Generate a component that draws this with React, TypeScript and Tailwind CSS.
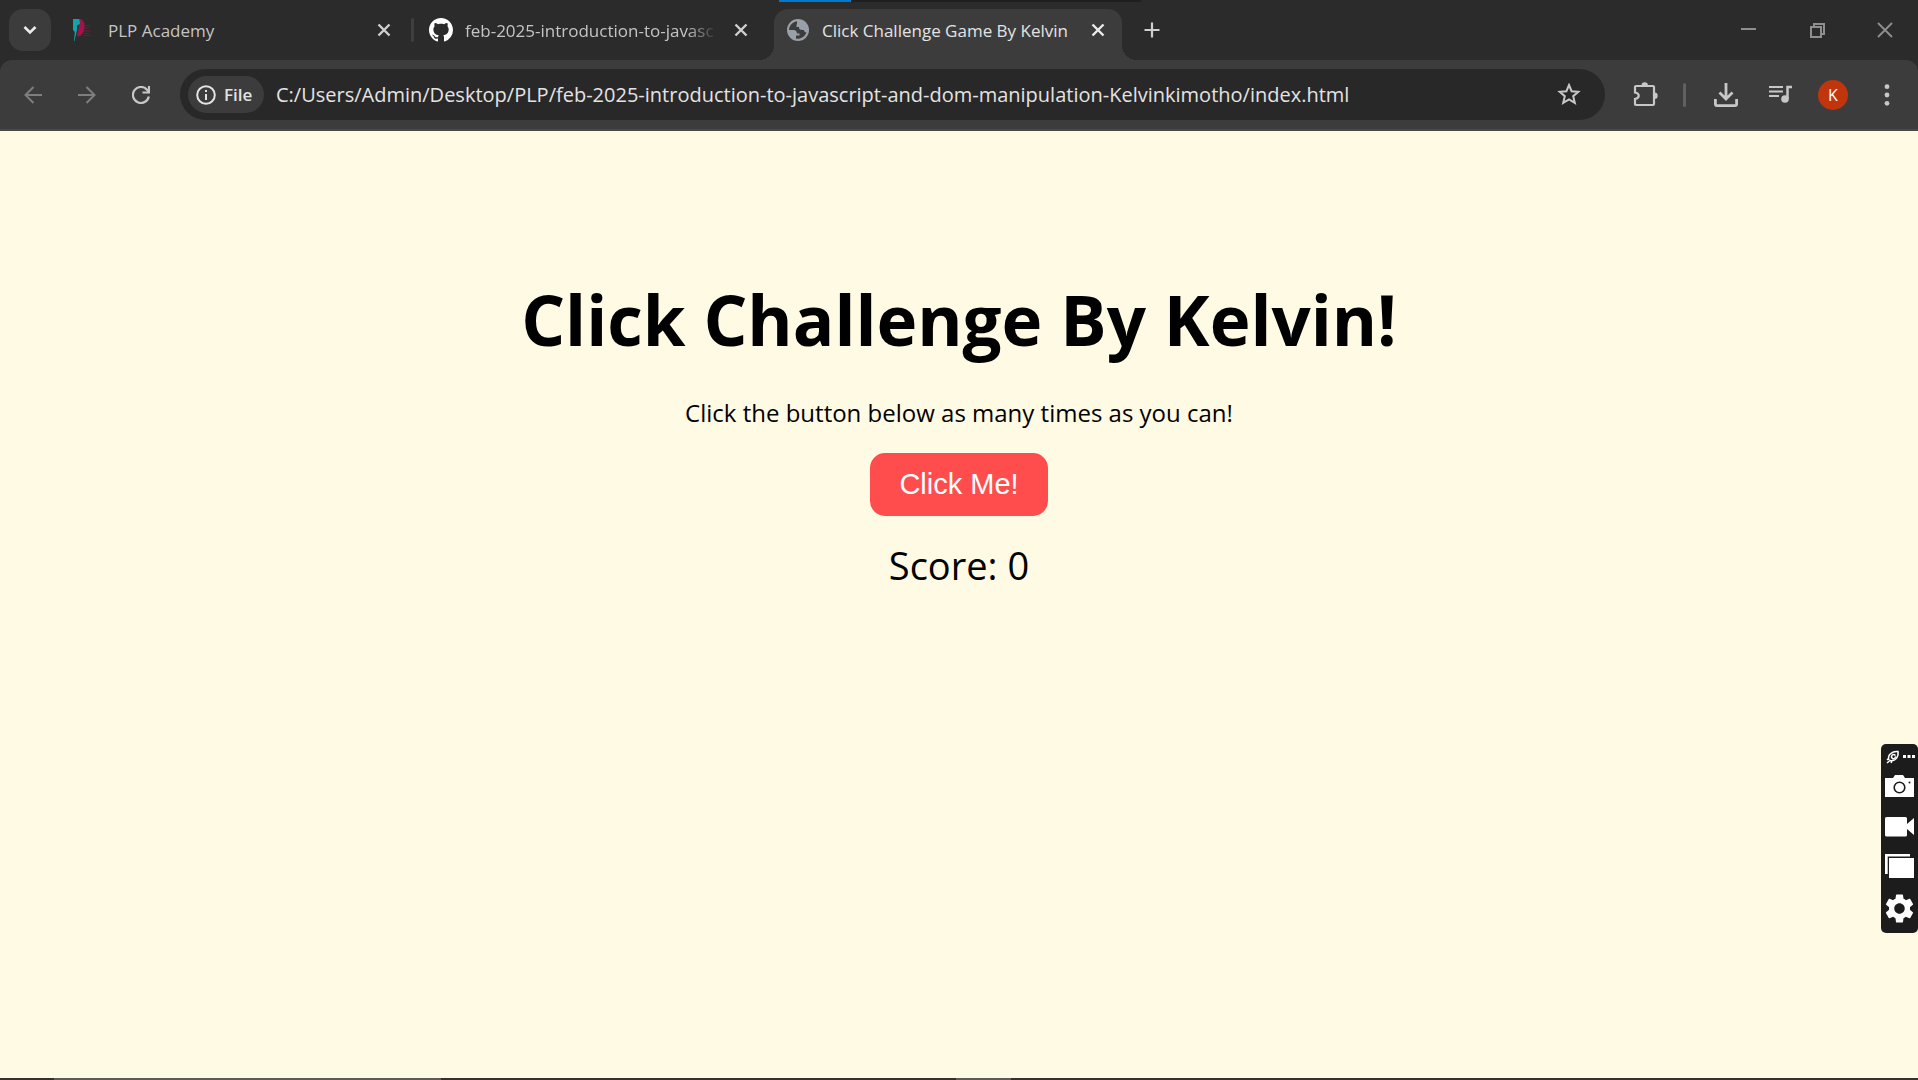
import { useState, type ReactNode } from "react";

type IconButtonProps = { label: string; className?: string; children: ReactNode };

function IconButton({ label, className = "", children }: IconButtonProps) {
  return (
    <button type="button" aria-label={label} className={`flex shrink-0 items-center justify-center ${className}`}>
      {children}
    </button>
  );
}

function CloseTab({ bright = false }: { bright?: boolean }) {
  return (
    <IconButton label="Close tab" className={bright ? "size-6 text-[#ececec]" : "size-6 text-[#cfcfcf]"}>
      <svg width="14" height="14" viewBox="0 0 14 14" fill="none" stroke="currentColor" strokeWidth="2.4">
        <path d="M1.5 1.5l11 11M12.5 1.5l-11 11" />
      </svg>
    </IconButton>
  );
}

function AcademyLogo() {
  return (
    <svg width="24" height="24" viewBox="0 0 24 24" className="shrink-0">
      <path d="M10 1c7 1 6 17-3 17.500L8 12l1-4z" fill="#a3124a" />
      <path d="M3 1h6.500l.5 5-2 1-1 5-2.500 11H4l.8-9L3 12z" fill="#0ea5ad" />
      <path d="M7 7l2 1-1.500 6z" fill="#2b2b2b" />
      <path d="M14 7.500h6M14 10h5M14 13h7M14 15.500h5M14 17.500h7" stroke="#6b1a38" strokeWidth="1" />
    </svg>
  );
}

function GitHubLogo() {
  return (
    <svg width="24" height="24" viewBox="0 0 16 16" fill="#fff" className="shrink-0">
      <path d="M8 0C3.580 0 0 3.580 0 8c0 3.540 2.290 6.530 5.470 7.590.4.070.55-.17.55-.38 0-.19-.01-.82-.01-1.490-2.010.37-2.530-.49-2.690-.94-.09-.23-.48-.94-.82-1.130-.28-.15-.68-.52-.01-.53.63-.01 1.080.58 1.230.82.72 1.210 1.870.87 2.330.66.070-.52.28-.87.51-1.070-1.780-.2-3.640-.89-3.640-3.950 0-.87.31-1.590.82-2.150-.08-.2-.36-1.020.08-2.120 0 0 .67-.21 2.200.82.64-.18 1.320-.27 2-.27s1.360.09 2 .27c1.530-1.040 2.200-.82 2.200-.82.44 1.100.16 1.920.08 2.120.51.56.82 1.270.82 2.150 0 3.070-1.870 3.750-3.650 3.950.29.25.54.73.54 1.480 0 1.070-.01 1.930-.01 2.200 0 .21.15.46.55.38A8.010 8.010 0 0 0 16 8c0-4.420-3.580-8-8-8z" />
    </svg>
  );
}

function Globe() {
  return (
    <svg width="24" height="24" viewBox="0 0 24 24" className="shrink-0">
      <circle cx="12" cy="12" r="11" fill="#9aa0a8" />
      <path
        d="M11 3.200C6.500 4 3.200 7.500 3 12h4.500c2 0 3.500 1.500 3.500 3.500h2.500v2H10v3.200c4.500.8 9-2 10.500-6.200-1.500 0-2.500-1-2.500-2.500-2 0-5 0-5-2.500V9h-2.500V6.500H11z"
        fill="#3c3c3c"
      />
    </svg>
  );
}

function TabStrip() {
  return (
    <header className="relative flex h-[60px] items-end bg-[#2b2b2b] text-[17px] leading-[26px] text-[#c4c4c4]">
      <div className="absolute left-[779px] top-0 flex h-[2px] w-[362px] bg-[#1f1f1f]">
        <div className="w-[72px] bg-[#0078d4]" />
      </div>
      <div className="flex h-[51px] shrink-0 items-start pl-[9px]">
        <IconButton label="Search tabs" className="size-[42px] rounded-[14px] bg-[#3c3c3c] text-[#ececec]">
          <svg width="14" height="10" viewBox="0 0 14 10" fill="none" stroke="currentColor" strokeWidth="2.600">
            <path d="M1.500 2L7 7.500 12.500 2" />
          </svg>
        </IconButton>
      </div>
      <div className="flex h-[51px] w-[360px] items-start gap-3 pl-[19px] pr-[15px] pt-[9px]">
        <AcademyLogo />
        <a href="#academy" className="min-w-0 flex-1 overflow-hidden whitespace-nowrap pl-0.5">PLP Academy</a>
        <CloseTab />
      </div>
      <div className="mb-[18px] h-6 w-[3px] rounded-sm bg-[#3f3f3f]" />
      <div className="flex h-[51px] w-[360px] items-start gap-3 pl-[15px] pr-[21px] pt-[9px]">
        <GitHubLogo />
        <a
          href="#repository"
          className="min-w-0 flex-1 overflow-hidden whitespace-nowrap [mask-image:linear-gradient(to_right,black_88%,transparent)]"
        >
          feb-2025-introduction-to-javasc
        </a>
        <CloseTab />
      </div>
      <div className="relative flex h-[51px] w-[348px] items-start gap-3 rounded-t-[14px] bg-[#3c3c3c] px-3 pt-[9px] text-[#e3e3e3]">
        <span className="absolute -left-[15px] bottom-0 size-[15px] bg-[radial-gradient(circle_at_0_0,transparent_15px,#3c3c3c_15px)]" />
        <span className="absolute -right-[15px] bottom-0 size-[15px] bg-[radial-gradient(circle_at_100%_0,transparent_15px,#3c3c3c_15px)]" />
        <Globe />
        <a href="#game" className="min-w-0 flex-1 overflow-hidden whitespace-nowrap">Click Challenge Game By Kelvin</a>
        <CloseTab bright />
      </div>
      <div className="flex h-[51px] flex-1 items-start pl-[18px] pt-[9px]">
        <IconButton label="New tab" className="size-6 text-[#cfcfcf]">
          <svg width="16" height="16" viewBox="0 0 16 16" stroke="currentColor" strokeWidth="2.200">
            <path d="M8 0.500v15M0.500 8h15" />
          </svg>
        </IconButton>
      </div>
      <div className="flex h-[60px] items-center text-[#8f8f8f]">
        <IconButton label="Minimize" className="h-[60px] w-[69px]">
          <svg width="15" height="16" viewBox="0 0 15 16"><path d="M0 6h15v2H0z" fill="currentColor" /></svg>
        </IconButton>
        <IconButton label="Restore" className="h-[60px] w-[69px]">
          <svg width="15" height="15" viewBox="0 0 15 15" fill="none" stroke="currentColor" strokeWidth="2">
            <path d="M1 4h10v10H1zM4 4V1h10v10h-3" />
          </svg>
        </IconButton>
        <IconButton label="Close window" className="h-[60px] w-[66px]">
          <svg width="16" height="16" viewBox="0 0 16 16" stroke="currentColor" strokeWidth="1.800">
            <path d="M1 1l14 14M15 1L1 15" />
          </svg>
        </IconButton>
      </div>
    </header>
  );
}

function Toolbar() {
  return (
    <div className="bg-[#2b2b2b]">
      <nav className="flex h-[71px] items-start rounded-t-[12px] border-b-2 border-[#484848] bg-[#3c3c3c] pt-[9px] text-[#c7c7c7]">
        <div className="flex h-[51px] items-center pl-[6px] text-[#7e7e7e]">
          <IconButton label="Back" className="h-10 w-[54px]">
            <svg width="18" height="18" viewBox="0 0 18 18" fill="none" stroke="currentColor" strokeWidth="2">
              <path d="M18 9H2M9.500 1L1.500 9l8 8" />
            </svg>
          </IconButton>
          <IconButton label="Forward" className="h-10 w-[54px]">
            <svg width="18" height="18" viewBox="0 0 18 18" fill="none" stroke="currentColor" strokeWidth="2">
              <path d="M0 9h16M8.500 1l8 8-8 8" />
            </svg>
          </IconButton>
          <IconButton label="Reload" className="h-10 w-[54px] text-[#c7c7c7]">
            <svg width="18" height="18" viewBox="0 0 18 18" fill="none" stroke="currentColor" strokeWidth="2.200">
              <path d="M16.800 10.500A8 8 0 1 1 15 3.700L17 6" />
              <path d="M17 0v6.500h-6.500" />
            </svg>
          </IconButton>
        </div>
        <div className="ml-3 flex h-[51px] min-w-0 flex-1 items-center rounded-full bg-[#282828] pl-2 pr-6">
          <button
            type="button"
            className="flex h-[37px] w-[76px] shrink-0 items-center gap-2 rounded-full bg-[#3c3c3c] pl-2 text-[17px] font-semibold text-[#e3e3e3]"
          >
            <svg width="20" height="20" viewBox="0 0 20 20" fill="none" stroke="currentColor" strokeWidth="2" className="shrink-0">
              <circle cx="10" cy="10" r="8.800" />
              <path d="M10 9v6M10 5v2" />
            </svg>
            File
          </button>
          <input
            aria-label="Address"
            defaultValue="C:/Users/Admin/Desktop/PLP/feb-2025-introduction-to-javascript-and-dom-manipulation-Kelvinkimotho/index.html"
            className="ml-3 h-9 min-w-0 flex-1 bg-transparent text-[20px] text-[#e3e3e3] outline-none"
          />
          <IconButton label="Bookmark" className="size-6">
            <svg width="24" height="24" viewBox="0 0 24 24" fill="none" stroke="currentColor" strokeWidth="2">
              <path d="M12 2l2.600 6.200 6.700.6-5.100 4.400 1.600 6.600L12 16.300l-5.800 3.500 1.600-6.600-5.100-4.400 6.700-.6z" />
            </svg>
          </IconButton>
        </div>
        <div className="flex h-[51px] shrink-0 items-center pl-[14px] pr-1">
          <IconButton label="Extensions" className="h-10 w-[54px]">
            <svg width="26" height="26" viewBox="0 0 26 26">
              <path
                d="M3 4h17q1 0 1 1v17q0 1-1 1H3q-1 0-1-1v-5c5-1 5-5.500 0-6.500V5q0-1 1-1z"
                fill="none"
                stroke="currentColor"
                strokeWidth="2.200"
              />
              <path d="M8.500 3.500a3.200 3.200 0 0 1 6.400 0zM21.500 10.500a3.200 3.200 0 0 1 0 6.400z" fill="currentColor" />
            </svg>
          </IconButton>
          <span className="mx-2.5 h-6 w-[3px] rounded-sm bg-[#606060]" />
          <IconButton label="Downloads" className="h-10 w-[60px]">
            <svg width="24" height="24" viewBox="0 0 24 24" fill="none" stroke="currentColor" strokeWidth="2.800">
              <path d="M12 0v16M5.500 9.500L12 16l6.500-6.500M1.400 16v5q0 1.600 1.600 1.600h18q1.600 0 1.600-1.600v-5" />
            </svg>
          </IconButton>
          <IconButton label="Media controls" className="h-10 w-[50px]">
            <svg width="24" height="20" viewBox="0 0 24 20" fill="none" stroke="currentColor" strokeWidth="2.200">
              <path d="M0 2h14M0 6.500h14M0 11h10" />
              <path d="M18.500 14V2H23" strokeWidth="2.500" />
              <circle cx="16" cy="14" r="3.800" fill="currentColor" stroke="none" />
            </svg>
          </IconButton>
          <IconButton label="Profile" className="mx-3 size-[30px] rounded-full bg-[#c1350d] font-['Open_Sans',sans-serif] text-[16px] text-white">
            K
          </IconButton>
          <IconButton label="Menu" className="h-10 w-[54px]">
            <svg width="6" height="22" viewBox="0 0 6 22" fill="currentColor">
              <circle cx="3" cy="2.700" r="2.400" />
              <circle cx="3" cy="11" r="2.400" />
              <circle cx="3" cy="19.300" r="2.400" />
            </svg>
          </IconButton>
        </div>
      </nav>
    </div>
  );
}

function CaptureWidget() {
  return (
    <aside className="fixed right-0 top-[744px] flex w-[37px] flex-col items-center rounded-[5px] bg-[#1c1c1c] pb-[10px] pt-[5px] text-white">
      <div className="flex h-[15px] items-center gap-[3px] pl-0.5">
        <svg width="14" height="14" viewBox="0 0 14 14" fill="none" stroke="currentColor" strokeWidth="1.500">
          <path d="M3 10C1 5 6 1 12 1.500 13 7 9 12 4 10.500L1 13M3 8l-2 2M6 11l-1 2" />
          <path d="M9.500 5.500C7 3 4.500 6 6 8s4 0 3-1.500" />
        </svg>
        <svg width="12" height="3" viewBox="0 0 12 3" fill="currentColor">
          <path d="M0 0h3v3H0zM4.500 0h3v3h-3zM9 0h3v3H9z" />
        </svg>
      </div>
      <IconButton label="Take screenshot" className="mt-[11px] h-[22px]">
        <svg width="29" height="22" viewBox="0 0 29 22">
          <path d="M0 3h8l2-3h8l2 3h9v19H0z" fill="currentColor" />
          <circle cx="14.500" cy="12.500" r="5.300" fill="none" stroke="#1c1c1c" strokeWidth="1.600" />
          <circle cx="24.500" cy="7.500" r="1" fill="#1c1c1c" />
        </svg>
      </IconButton>
      <IconButton label="Record video" className="mt-5 h-5">
        <svg width="29" height="20" viewBox="0 0 29 20" fill="currentColor">
          <path d="M1.500 0h19q1.500 0 1.500 1.500V7l7-6v17l-7-6v6q0 1.500-1.500 1.500h-19Q0 19.500 0 18V1.500Q0 0 1.500 0z" />
        </svg>
      </IconButton>
      <IconButton label="Open gallery" className="mt-[17px] h-6">
        <svg width="29" height="24" viewBox="0 0 29 24" fill="currentColor">
          <path d="M0 0h25v2.500H2.700V20H0zM4 4h25v20H4z" />
        </svg>
      </IconButton>
      <IconButton label="Settings" className="mt-[15px] h-[30px]">
        <svg width="35" height="35" viewBox="0 0 24 24" fill="currentColor">
          <path d="M19.140 12.940c.04-.3.06-.61.06-.94 0-.32-.02-.64-.07-.94l2.030-1.580c.18-.14.23-.41.12-.61l-1.920-3.320c-.12-.22-.37-.29-.59-.22l-2.390.96c-.5-.38-1.030-.7-1.620-.94l-.36-2.540c-.04-.24-.24-.41-.48-.41h-3.840c-.24 0-.43.17-.47.41l-.36 2.540c-.59.24-1.130.57-1.620.94l-2.390-.96c-.22-.08-.47 0-.59.22L2.740 8.870c-.12.21-.08.47.12.61l2.030 1.580c-.05.3-.09.63-.09.94s.02.64.07.94l-2.030 1.580c-.18.14-.23.41-.12.61l1.920 3.320c.12.22.37.29.59.22l2.390-.96c.5.38 1.030.7 1.620.94l.36 2.540c.05.24.24.41.48.41h3.840c.24 0 .44-.17.47-.41l.36-2.540c.59-.24 1.130-.56 1.620-.94l2.390.96c.22.08.47 0 .59-.22l1.920-3.320c.12-.22.07-.47-.12-.61l-2.010-1.580zM12 15.600c-1.980 0-3.600-1.620-3.600-3.600s1.620-3.600 3.600-3.600 3.600 1.620 3.600 3.600-1.620 3.600-3.600 3.600z" />
        </svg>
      </IconButton>
    </aside>
  );
}

function Game() {
  const [score, setScore] = useState(0);
  return (
    <main className="flex flex-1 flex-col items-center bg-[#fffae3] pt-[138px] font-['Comic_Sans_MS','Open_Sans',sans-serif] text-black">
      <h1 className="text-center text-[69px] font-bold leading-[100px]">Click Challenge By Kelvin!</h1>
      <p className="mt-[26px] text-center text-[24px] leading-9">Click the button below as many times as you can!</p>
      <button
        type="button"
        onClick={() => setScore(score + 1)}
        className="mt-[22px] rounded-[15px] bg-[#ff4d4d] px-[29px] py-[15px] font-['Liberation_Sans',Arial,sans-serif] text-[29px] leading-[33px] text-white"
      >
        Click Me!
      </button>
      <p className="mt-6 text-[38px] leading-[50px]">Score: {score}</p>
    </main>
  );
}

export default function App() {
  return (
    <div className="flex min-h-screen flex-col font-['Segoe_UI','Open_Sans',sans-serif]">
      <TabStrip />
      <Toolbar />
      <Game />
      <CaptureWidget />
      <footer className="flex h-[2px] bg-[#35302e]">
        <span className="ml-[54px] w-[387px] bg-[#5e5a58]" />
        <span className="ml-[515px] w-[55px] bg-[#5e5a58]" />
      </footer>
    </div>
  );
}
